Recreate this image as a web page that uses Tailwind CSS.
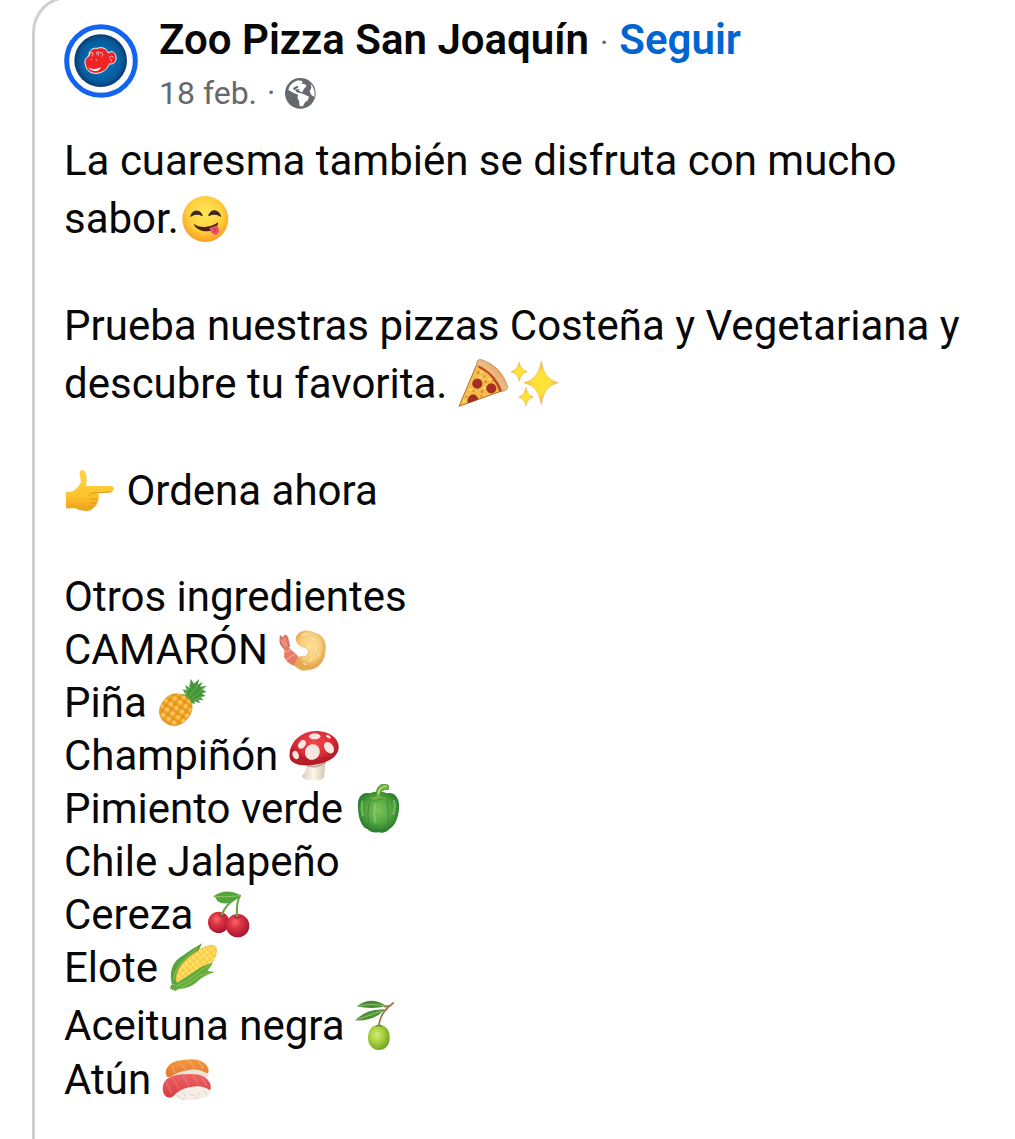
<!DOCTYPE html>
<html lang="es">
<head>
    <meta charset="UTF-8">
    <meta name="viewport" content="width=device-width, initial-scale=1.0">
    <title>Zoo Pizza San Joaquín</title>
    <script src="https://cdn.jsdelivr.net/npm/@tailwindcss/browser@4"></script>
</head>
<body class="bg-white font-[Roboto,sans-serif] text-[#080809] overflow-x-hidden">

    <article class="-mt-1 ml-8 min-h-[calc(100vh+4px)] rounded-tl-[36px] border-t-3 border-l-3 border-[#ced0d4] pt-[25px] pl-[29px] pr-8">

        <!-- Post header -->
        <header class="flex gap-[21px]">
            <a href="#" aria-label="Zoo Pizza San Joaquín" class="block size-[74px] shrink-0">
                <svg viewBox="132 72 222 222" class="size-full">
                    <defs>
                        <radialGradient id="avatar"><stop offset=".5" stop-color="#0868ad"/><stop offset=".8" stop-color="#075b9c"/><stop offset="1" stop-color="#083b70"/></radialGradient>
                    </defs>
                    <circle cx="243" cy="183" r="103" fill="#fff" stroke="#1264f0" stroke-width="15"/>
                    <circle cx="242" cy="182" r="79" fill="url(#avatar)"/>
                    <path d="M207 164C208 150 219 143 232 145C247 139 261 147 265 159C276 150 288 158 288 173C289 187 279 195 268 191C263 207 249 218 231 220C213 222 198 211 197 196C192 186 196 174 204 171Z" fill="#ee2424" stroke="#fff" stroke-width="3"/>
                    <path d="M205 203Q226 212 243 202Q236 217 219 212Q210 210 205 203Z" fill="#fff"/>
                    <g fill="none" stroke="#fff" stroke-width="2" stroke-linecap="round">
                        <path d="M209 166Q208 156 217 157Q221 163 217 168M230 163Q228 155 235 155Q239 161 235 166M241 158Q247 155 249 163L246 169"/>
                        <path d="M215 178V180M229 179V181M268 172Q275 164 280 171M270 177Q278 177 274 185"/>
                    </g>
                </svg>
            </a>
            <div>
                <h1 class="-mt-2 flex items-baseline gap-[11px] text-[42px] leading-[48px] font-semibold">
                    <span>Zoo Pizza San Joaquín</span>
                    <span class="text-[32px] font-normal text-[#65686c]">·</span>
                    <a href="#" class="text-[#0064d1]">Seguir</a>
                </h1>
                <p class="mt-1 flex items-center gap-2.5 text-[32px] leading-[44px] text-[#65686c]">
                    <span>18 feb.</span>
                    <span>·</span>
                    <svg viewBox="797 230 93 93" class="size-[31px]" role="img" aria-label="Público">
                        <circle cx="843" cy="276" r="46" fill="#65686c"/>
                        <path d="M807 266C810 252 822 240 838 237L850 240L847 248L855 247L862 254L854 262L849 273L840 270L838 263L827 265L832 273L846 276L857 280L869 286L866 296L856 304L851 315L841 315L839 298L834 289L836 280L823 275Z" fill="#fff"/>
                        <path d="M821 260L833 253L838 257L831 262L824 267Z" fill="#65686c"/>
                        <path d="M874 248C884 258 888 274 885 287L876 281L871 270L876 259Z" fill="#fff"/>
                    </svg>
                </p>
            </div>
        </header>

        <!-- Post text -->
        <div class="mt-[17px] flex flex-col gap-[49px] text-[42px] leading-[58px]">
            <p>
                La cuaresma también se disfruta con mucho<br>
                sabor.<svg viewBox="26 26 150 150" class="inline size-[50px] align-[-11px]" role="img" aria-label="Cara saboreando">
                    <defs>
                        <radialGradient id="face" cx=".5" cy=".4" r=".6"><stop offset="0" stop-color="#ffe657"/><stop offset=".6" stop-color="#ffd23f"/><stop offset="1" stop-color="#fb9b22"/></radialGradient>
                    </defs>
                    <circle cx="105" cy="101" r="69" fill="url(#face)"/>
                    <path d="M61 93Q66 77 78 77Q91 77 96 91Q79 81 61 93ZM115 91Q120 76 132 76Q146 77 151 93Q134 81 115 91Z" fill="#38291d" stroke="#38291d" stroke-width="3" stroke-linejoin="round"/>
                    <path d="M70 115C86 128 120 129 143 111C143 127 132 138 112 138C91 138 74 129 70 115Z" fill="#482313"/>
                    <path d="M117 127Q129 125 139 120C148 129 149 143 139 148C128 150 120 140 117 127Z" fill="#e45467"/>
                    <path d="M130 127L136 139" stroke="#b93148" stroke-width="3"/>
                </svg>
            </p>
            <p>
                Prueba nuestras pizzas Costeña y Vegetariana y<br>
                descubre tu favorita. <svg viewBox="38 27 150 150" class="inline size-[50px] align-[-11px]" role="img" aria-label="Pizza">
                    <defs>
                        <linearGradient id="crust" x1="0" y1="1" x2="1" y2="0"><stop offset="0" stop-color="#c77a3c"/><stop offset=".5" stop-color="#edbd83"/><stop offset="1" stop-color="#d18b4b"/></linearGradient>
                    </defs>
                    <path d="M93 46L41 169L172 122Q150 74 93 46Z" fill="#f6bd4d" stroke="#c06d27" stroke-width="3" stroke-linejoin="round"/>
                    <path d="M101 50Q146 69 166 124" fill="none" stroke="#bd3d20" stroke-width="7"/>
                    <path d="M94 43Q93 26 109 29Q169 49 187 110Q189 121 170 124Q155 73 94 43Z" fill="url(#crust)" stroke="#bd7540" stroke-width="2"/>
                    <g fill="#a72d22" stroke="#7e2519" stroke-width="2">
                        <circle cx="96" cy="101" r="14"/><circle cx="138" cy="115" r="14"/><path d="M68 158Q66 138 82 134Q96 135 97 148Z"/>
                    </g>
                    <g fill="#d8842c">
                        <circle cx="98" cy="68" r="4"/><circle cx="117" cy="79" r="3"/><circle cx="121" cy="96" r="4"/><circle cx="85" cy="123" r="3"/><circle cx="110" cy="125" r="4"/><circle cx="63" cy="140" r="3"/><circle cx="108" cy="139" r="3"/><circle cx="143" cy="93" r="3"/>
                    </g>
                    <g fill="#fff0a0">
                        <circle cx="108" cy="65" r="3"/><circle cx="104" cy="82" r="3"/><circle cx="75" cy="119" r="3"/><circle cx="118" cy="113" r="3"/><circle cx="56" cy="154" r="3"/><circle cx="133" cy="88" r="3"/>
                    </g>
                </svg><svg viewBox="190 27 150 150" class="inline size-[50px] overflow-visible align-[-11px]" role="img" aria-label="Destellos">
                    <defs>
                        <radialGradient id="spark"><stop offset="0" stop-color="#ffe735"/><stop offset=".5" stop-color="#ffdf3a"/><stop offset="1" stop-color="#efad42"/></radialGradient>
                    </defs>
                    <g fill="url(#spark)" stroke="#efb850" stroke-width="2">
                        <path d="M290 33Q297 89 341 98Q297 107 290 164Q282 107 238 98Q282 89 290 33Z"/>
                        <path d="M224 37Q228 60 248 65Q228 70 224 94Q219 70 199 65Q219 60 224 37Z"/>
                        <path d="M244 112Q248 136 266 141Q248 146 244 168Q240 146 222 141Q240 136 244 112Z"/>
                    </g>
                </svg>
            </p>
            <p>
                <svg viewBox="28 18 150 150" class="mr-0.5 inline size-[50px] align-[-11px]" role="img" aria-label="Mano señalando">
                    <defs>
                        <linearGradient id="hand" x1="0" y1="0" x2="0" y2="1"><stop offset="0" stop-color="#ffd34b"/><stop offset=".6" stop-color="#fec52e"/><stop offset="1" stop-color="#eca01d"/></linearGradient>
                    </defs>
                    <path d="M34 95H51C63 91 73 78 79 66L75 41C74 28 87 26 92 36C97 50 98 64 93 78L169 78C180 79 180 94 169 96L129 99Q137 107 130 115Q135 123 126 129Q128 138 118 140Q113 153 94 153Q75 153 62 145L34 145Z" fill="url(#hand)"/>
                    <path d="M169 96L115 99Q103 101 104 108M130 115Q116 121 108 116M126 129Q115 134 106 128M118 140Q110 144 103 138" fill="none" stroke="#dc971b" stroke-width="3" stroke-linecap="round"/>
                </svg>
                Ordena ahora
            </p>
            <div class="pt-px leading-[53px]">
                <h2>Otros ingredientes</h2>
                <ul>
                    <li>
                        CAMARÓN
                        <svg viewBox="24 15 150 150" class="inline size-[50px] align-[-11px]" role="img" aria-label="Camarón">
                            <defs>
                                <radialGradient id="batter" cx=".5" cy=".4"><stop offset="0" stop-color="#ffdf98"/><stop offset=".7" stop-color="#f7cd78"/><stop offset="1" stop-color="#e4a850"/></radialGradient>
                            </defs>
                            <path d="M30 54L31 47L40 53L44 45Q51 44 53 52L59 78L48 91Q26 76 30 54Z" fill="#df7668" stroke="#c95b4e" stroke-width="2"/>
                            <path d="M44 94Q37 80 49 76L65 91Q78 101 86 111L79 139Q52 133 42 110Z" fill="#e87965"/>
                            <path d="M42 54L51 79M34 59L45 79M41 99Q57 90 63 91M49 119Q66 105 76 104" fill="none" stroke="#f3a08b" stroke-width="4"/>
                            <path d="M78 55C83 31 112 27 135 40C157 43 171 68 165 94C164 125 143 150 110 150Q90 155 74 136Q80 115 91 109C110 114 118 99 114 89C107 77 81 86 78 55Z" fill="url(#batter)" stroke="#e8b15b" stroke-width="2"/>
                            <path d="M96 47Q101 40 111 43M126 55L133 59M134 78Q142 83 138 91M126 115L120 123M101 130L107 134M143 109L146 101" stroke="#ffe4a6" stroke-width="4" stroke-linecap="round" fill="none"/>
                        </svg>
                    </li>
                    <li>
                        Piña
                        <svg viewBox="20 24 150 150" class="inline size-[50px] overflow-visible align-[-11px]" role="img" aria-label="Piña">
                            <defs>
                                <pattern id="scales" width="20" height="20" patternUnits="userSpaceOnUse" patternTransform="rotate(35)"><rect width="20" height="20" fill="#e0901f"/><rect x="1" y="1" width="17" height="17" rx="6" fill="#f5ad32"/><ellipse cx="9" cy="8" rx="6" ry="5" fill="#fdcb59"/></pattern>
                            </defs>
                            <path d="M99 84L94 73L106 74L97 58L109 61L105 45L118 55L121 26L131 41L147 27L142 44L157 35L149 50L171 48L154 58L169 66L154 70L166 78L149 81L160 91L143 89L151 100L133 94L132 103Z" fill="#43943a"/>
                            <path d="M104 80L121 39M113 84L145 42M121 88L163 54M127 92L160 78M111 79L104 61" stroke="#6fb548" stroke-width="3"/>
                            <path d="M65 73C90 66 120 81 125 104C129 129 107 163 74 167C46 167 26 147 27 121C32 98 46 80 65 73Z" fill="url(#scales)" stroke="#db8b26" stroke-width="2"/>
                        </svg>
                    </li>
                    <li>
                        Champiñón
                        <svg viewBox="27 27 150 150" class="inline size-[50px] align-[-11px]" role="img" aria-label="Champiñón">
                            <defs>
                                <linearGradient id="stem"><stop offset="0" stop-color="#d8cbbc"/><stop offset=".5" stop-color="#fff6e9"/><stop offset="1" stop-color="#d4c6b6"/></linearGradient>
                                <radialGradient id="cap" cx=".5" cy=".35"><stop offset="0" stop-color="#f5474c"/><stop offset=".65" stop-color="#e12d38"/><stop offset="1" stop-color="#b51d29"/></radialGradient>
                                <clipPath id="cap-shape"><path d="M28 105C28 59 64 26 112 27C151 28 179 52 176 79C172 108 143 123 99 129C66 134 32 127 28 105Z"/></clipPath>
                            </defs>
                            <path d="M82 123H136L132 169Q115 179 91 174Q70 174 65 162Q79 150 82 123Z" fill="url(#stem)"/>
                            <path d="M80 130Q110 141 137 120" fill="none" stroke="#b9a797" stroke-width="5"/>
                            <g clip-path="url(#cap-shape)">
                                <rect x="27" y="26" width="150" height="106" fill="url(#cap)"/>
                                <g fill="#f6e6df">
                                    <ellipse cx="97" cy="90" rx="22" ry="24" transform="rotate(30 97 90)"/><ellipse cx="104" cy="43" rx="17" ry="9"/><ellipse cx="66" cy="67" rx="10" ry="14" transform="rotate(35 66 67)"/><ellipse cx="147" cy="77" rx="13" ry="19" transform="rotate(-35 147 77)"/><ellipse cx="47" cy="99" rx="9" ry="13" transform="rotate(-20 47 99)"/><ellipse cx="145" cy="44" rx="8" ry="4" transform="rotate(30 145 44)"/>
                                </g>
                            </g>
                        </svg>
                    </li>
                    <li>
                        Pimiento verde
                        <svg viewBox="222 186 150 150" class="inline size-[50px] align-[-11px]" role="img" aria-label="Pimiento verde">
                            <defs>
                                <radialGradient id="pepper" cx=".5" cy=".45"><stop offset="0" stop-color="#7cc258"/><stop offset=".6" stop-color="#56a842"/><stop offset="1" stop-color="#2f8130"/></radialGradient>
                            </defs>
                            <path d="M268 214C247 208 231 226 234 254C234 286 244 315 263 322Q275 334 294 331Q315 336 328 321C349 310 359 276 357 246C354 220 339 210 322 214Q295 203 268 214Z" fill="url(#pepper)"/>
                            <path d="M274 225Q255 276 271 322M318 224Q332 281 320 324" fill="none" stroke="#3c8d38" stroke-width="3"/>
                            <path d="M247 239Q242 260 249 280M286 247Q280 277 286 300M342 237Q348 253 340 276" fill="none" stroke="#a3d486" stroke-width="7" stroke-linecap="round" opacity=".5"/>
                            <path d="M264 227Q279 225 288 220Q288 193 306 187Q321 183 326 192L325 203Q305 199 300 220Q311 229 329 227Q315 238 300 231Q282 242 264 227Z" fill="#6eb046" stroke="#3d872f" stroke-width="2"/>
                            <path d="M295 217Q296 195 320 192" fill="none" stroke="#b9d977" stroke-width="5"/>
                        </svg>
                    </li>
                    <li>Chile Jalapeño</li>
                    <li>
                        Cereza
                        <svg viewBox="26 15 150 150" class="inline size-[50px] align-[-11px]" role="img" aria-label="Cerezas">
                            <defs>
                                <radialGradient id="cherry" cx=".4" cy=".35" r=".65"><stop offset="0" stop-color="#f36b6c"/><stop offset=".4" stop-color="#dc3442"/><stop offset="1" stop-color="#a81630"/></radialGradient>
                            </defs>
                            <circle cx="70" cy="112" r="32" fill="url(#cherry)"/>
                            <path d="M78 91Q92 55 134 32M126 93Q121 58 134 32" fill="none" stroke="#6aa744" stroke-width="6" stroke-linecap="round"/>
                            <circle cx="127" cy="122" r="35" fill="url(#cherry)"/>
                            <path d="M71 90Q80 97 88 92M116 95Q127 104 137 95" fill="none" stroke="#931a27" stroke-width="3"/>
                            <path d="M126 95L124 83M79 91L85 78" stroke="#6aa744" stroke-width="6"/>
                            <path d="M54 34Q93 6 137 32Q96 69 66 48Q62 38 54 34Z" fill="#54a53e"/>
                            <path d="M57 35Q96 37 133 32" fill="none" stroke="#8bc961" stroke-width="3"/>
                        </svg>
                    </li>
                    <li>
                        Elote
                        <svg viewBox="25 24 150 150" class="inline size-[50px] align-[-11px]" role="img" aria-label="Elote">
                            <defs>
                                <pattern id="kernels" width="14" height="14" patternUnits="userSpaceOnUse" patternTransform="rotate(-40)"><rect width="14" height="14" fill="#f5c743"/><rect x="1" y="1" width="12" height="12" rx="4" fill="#ffd957"/><circle cx="6" cy="5" r="3" fill="#ffe77e"/></pattern>
                            </defs>
                            <path d="M37 149C27 112 38 77 72 60Q96 42 127 25Q113 60 93 85L57 149Z" fill="#5ba33c"/>
                            <path d="M49 137C48 98 80 69 113 49C140 27 171 27 170 41C174 67 151 92 133 107L82 144Q61 156 49 137Z" fill="url(#kernels)" stroke="#e7b73c" stroke-width="2"/>
                            <path d="M43 150C69 133 98 113 123 97Q143 86 160 83Q154 94 143 107L165 111C143 119 126 126 111 142Q88 162 56 162L48 168L31 161L34 150Z" fill="#65aa3d"/>
                            <path d="M42 135Q43 104 73 74L112 39M50 153Q86 138 104 122T151 90M63 158Q97 143 119 122L152 113" fill="none" stroke="#8fc658" stroke-width="3"/>
                        </svg>
                    </li>
                    <li class="mt-[5px]">
                        Aceituna negra
                        <svg viewBox="30 33 150 150" class="inline size-[50px] overflow-visible align-[-11px]" role="img" aria-label="Aceituna">
                            <defs>
                                <radialGradient id="olive" cx=".4" cy=".4" r=".65"><stop offset="0" stop-color="#d3e978"/><stop offset=".5" stop-color="#a7cf3b"/><stop offset="1" stop-color="#6c9f25"/></radialGradient>
                            </defs>
                            <path d="M145 39Q107 65 102 104M137 47L119 50M125 60L109 61" fill="none" stroke="#9a7450" stroke-width="5" stroke-linecap="round"/>
                            <path d="M35 49Q78 16 124 48Q82 60 35 49Z" fill="#478c38"/>
                            <path d="M31 91Q63 56 119 59Q85 95 31 91Z" fill="#4b9138"/>
                            <path d="M40 48Q83 39 119 48M38 88L112 62" fill="none" stroke="#98c468" stroke-width="3"/>
                            <path d="M101 104C121 104 134 119 134 143C134 166 120 180 102 180C83 180 69 164 69 143C69 120 81 104 101 104Z" fill="url(#olive)"/>
                            <path d="M94 109L103 105L111 110" fill="none" stroke="#63852c" stroke-width="4"/>
                        </svg>
                    </li>
                    <li class="mt-px">
                        Atún
                        <svg viewBox="22 15 150 150" class="inline size-[50px] align-[-11px]" role="img" aria-label="Sushi">
                            <defs>
                                <linearGradient id="salmon" x1="0" y1="0" x2="0" y2="1"><stop offset="0" stop-color="#f29a45"/><stop offset="1" stop-color="#e8752f"/></linearGradient>
                                <linearGradient id="tuna" x1="0" y1="0" x2="0" y2="1"><stop offset="0" stop-color="#ec6663"/><stop offset="1" stop-color="#d93945"/></linearGradient>
                            </defs>
                            <path d="M52 60H157Q165 69 159 80L142 88H45Z" fill="#eee3d9"/>
                            <path d="M38 81Q30 70 35 57Q47 31 85 30Q148 19 161 56Q164 67 157 70Q133 54 101 60Q66 66 45 82Z" fill="url(#salmon)"/>
                            <path d="M51 48L61 69M74 37L94 60M103 31L120 55M129 31L145 57" stroke="#f7b26a" stroke-width="3"/>
                            <path d="M53 137Q65 112 111 102Q156 94 164 117Q171 136 155 142Q129 152 99 150Q73 153 53 137Z" fill="#f6eee8"/>
                            <path d="M67 136L75 140M86 129L91 138M106 132L117 137M133 128L129 138M149 123L155 131M83 147L92 145M121 145L130 143" stroke="#e4d8d0" stroke-width="4" stroke-linecap="round"/>
                            <path d="M29 134Q19 116 29 96Q46 72 91 73Q151 66 166 99Q171 115 166 121Q142 104 108 111Q78 116 60 134Q44 153 29 134Z" fill="url(#tuna)"/>
                            <path d="M34 94L50 131M52 81L75 118M81 74L104 108M112 72L132 104M140 79L156 108" stroke="#ee7b76" stroke-width="3"/>
                        </svg>
                    </li>
                </ul>
            </div>
        </div>

    </article>

</body>
</html>
